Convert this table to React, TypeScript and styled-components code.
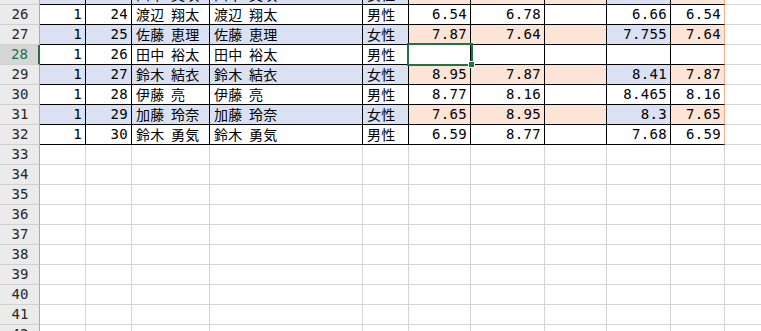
import styled, { createGlobalStyle } from "styled-components"

const GlobalStyle = createGlobalStyle`
  html, body {
    margin: 0;
    padding: 0;
    background: #ffffff;
    overflow: hidden;
  }
`

type Tone = "blue" | "peach" | undefined

type RowData = {
  no: number
  cells: (string | number)[]
}

const COLS = "40px 46px 46px 78px 153px 46px 62px 74px 62px 64px 54px 36px"

const rows: RowData[] = [
  { no: 25, cells: [1, 23, "山本 美咲", "山本 美咲", "女性", "7.12", "7.45", "", "7.285", "7.12"] },
  { no: 26, cells: [1, 24, "渡辺 翔太", "渡辺 翔太", "男性", "6.54", "6.78", "", "6.66", "6.54"] },
  { no: 27, cells: [1, 25, "佐藤 恵理", "佐藤 恵理", "女性", "7.87", "7.64", "", "7.755", "7.64"] },
  { no: 28, cells: [1, 26, "田中 裕太", "田中 裕太", "男性", "", "", "", "", ""] },
  { no: 29, cells: [1, 27, "鈴木 結衣", "鈴木 結衣", "女性", "8.95", "7.87", "", "8.41", "7.87"] },
  { no: 30, cells: [1, 28, "伊藤 亮", "伊藤 亮", "男性", "8.77", "8.16", "", "8.465", "8.16"] },
  { no: 31, cells: [1, 29, "加藤 玲奈", "加藤 玲奈", "女性", "7.65", "8.95", "", "8.3", "7.65"] },
  { no: 32, cells: [1, 30, "鈴木 勇気", "鈴木 勇気", "男性", "6.59", "8.77", "", "7.68", "6.59"] },
]

const emptyRows = Array.from({ length: 10 }, (_, i) => 33 + i)

// column tone for striped rows (B..K)
const stripe: Tone[] = ["blue", "blue", "blue", "blue", "blue", "peach", "peach", "peach", "blue", "peach"]
// which columns are text (left aligned)
const textCols = [2, 3, 4]

const ACTIVE_ROW = 28
const ACTIVE_COL = 5

const Sheet = styled.div`
  display: grid;
  grid-template-columns: ${COLS};
  grid-auto-rows: 20px;
  margin-top: -15px;
  width: 761px;
  font-family: "DejaVu Sans Mono", "Noto Sans CJK JP", monospace;
  font-size: 14px;
  color: #000000;
`

const RowHead = styled.div<{ $active?: boolean }>`
  box-sizing: border-box;
  display: flex;
  align-items: center;
  justify-content: center;
  padding-left: 1px;
  background: ${(p) => (p.$active ? "#d6d6d6" : "#ebebeb")};
  color: ${(p) => (p.$active ? "#1e7145" : "#262626")};
  border-bottom: 1px solid #d0d0d0;
  border-right: ${(p) => (p.$active ? "2px solid #217346" : "1px solid #a8a8a8")};
  line-height: 19px;
`

const Cell = styled.div<{
  $tone?: Tone
  $text?: boolean
  $data?: boolean
  $orangeEdge?: boolean
  $last?: boolean
  $active?: boolean
}>`
  position: relative;
  z-index: ${(p) => (p.$active ? 2 : "auto")};
  box-sizing: border-box;
  padding: 0 ${(p) => (p.$text ? "4px" : "3px")};
  background: ${(p) =>
    p.$tone === "blue" ? "#d9e1f2" : p.$tone === "peach" ? "#fce4d6" : "#ffffff"};
  border-bottom: 1px solid ${(p) => (p.$data ? "#000000" : "#d4d4d4")};
  border-right: ${(p) =>
    p.$last
      ? "none"
      : `1px solid ${p.$orangeEdge ? "#f4b084" : p.$data ? "#000000" : "#d4d4d4"}`};
  text-align: ${(p) => (p.$text ? "left" : "right")};
  line-height: 19px;
  white-space: nowrap;
  font-family: ${(p) =>
    p.$text
      ? `"Noto Sans CJK JP", sans-serif`
      : `"DejaVu Sans Mono", "Noto Sans CJK JP", monospace`};
  font-size: 14px;
  word-spacing: 3px;
  letter-spacing: 0.3px;
`

const Selection = styled.div`
  position: absolute;
  top: -2px;
  left: -2px;
  right: -3px;
  bottom: -2px;
  border: 2px solid #217346;
  pointer-events: none;
`

const FillHandle = styled.span`
  position: absolute;
  right: -4px;
  bottom: -4px;
  width: 5px;
  height: 5px;
  background: #217346;
  border: 1px solid #ffffff;
`

export default function App() {
  return (
    <>
      <GlobalStyle />
      <Sheet>
        {rows.map((row) => {
          const striped = row.no % 2 === 1
          return [
            <RowHead key={`h${row.no}`} $active={row.no === ACTIVE_ROW}>
              {row.no}
            </RowHead>,
            ...row.cells.map((value, ci) => {
              const active = row.no === ACTIVE_ROW && ci === ACTIVE_COL
              return (
                <Cell
                  key={`c${row.no}-${ci}`}
                  $data
                  $active={active}
                  $text={textCols.includes(ci)}
                  $tone={striped ? stripe[ci] : undefined}
                  $orangeEdge={ci === 9}
                >
                  {value}
                  {active && (
                    <Selection>
                      <FillHandle />
                    </Selection>
                  )}
                </Cell>
              )
            }),
            <Cell key={`l${row.no}`} $last />,
          ]
        })}
        {emptyRows.map((no) => [
          <RowHead key={`h${no}`}>{no}</RowHead>,
          ...Array.from({ length: 11 }, (_, ci) => (
            <Cell key={`e${no}-${ci}`} $last={ci === 10} />
          )),
        ])}
      </Sheet>
    </>
  )
}
